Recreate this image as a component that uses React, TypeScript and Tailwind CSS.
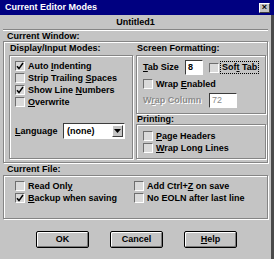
import type { ReactNode } from "react";

function Box({ checked }: { checked?: boolean }) {
  return (
    <span className="flex h-[10px] w-[10px] shrink-0 items-center justify-center border border-t-[#6e6e6e] border-l-[#6e6e6e] border-b-white border-r-white bg-[#dadada]">
      {checked && (
        <svg width="8" height="8" viewBox="0 0 8 8">
          <path d="M1 4.2L3 6.6L7 1" fill="none" stroke="#000" strokeWidth="1.5" />
        </svg>
      )}
    </span>
  );
}

function CheckRow({
  checked,
  children,
}: {
  checked?: boolean;
  children: ReactNode;
}) {
  return (
    <div className="flex h-[12px] items-center gap-[3px]">
      <Box checked={checked} />
      <span className="leading-none whitespace-nowrap">{children}</span>
    </div>
  );
}

const etched =
  "border border-[#858585] shadow-[inset_1px_1px_0_#fff,1px_1px_0_#fff]";

const sunken =
  "border border-t-[#3c3c3c] border-l-[#3c3c3c] border-b-white border-r-white bg-white";

function Button({ children }: { children: ReactNode }) {
  return (
    <div className="flex h-[17px] w-[53px] items-center justify-center rounded-[2px] border border-black shadow-[inset_1px_1px_0_#fff,inset_-1px_-1px_0_#7a7a7a] leading-none">
      {children}
    </div>
  );
}

export default function App() {
  return (
    <div className="h-[259px] w-[274px] overflow-hidden bg-[#c4c4c4] font-['Liberation_Sans',Arial,sans-serif] text-[9px] font-bold text-black">
      {/* Title bar */}
      <div className="flex h-[15px] items-center justify-between bg-[#000080] pl-[5px] pr-[4px] text-white">
        <span className="leading-none">Current Editor Modes</span>
        <span className="flex h-[10px] w-[11px] items-center justify-center border border-t-white border-l-white border-b-[#404040] border-r-[#404040] bg-[#c4c4c4] text-[9px] leading-none text-black">
          ×
        </span>
      </div>

      <div className="h-[244px] border-r-[3px] border-r-[#4a4a4a]">
        <div className="flex h-[14px] items-center justify-center">
          <span className="leading-none">Untitled1</span>
        </div>
        <div className="mx-[3px] h-[2px] border-t border-t-[#858585] border-b border-b-white" />

        <div className="flex h-[10px] items-center pl-[7px] leading-none">
          Current Window:
        </div>

        {/* Current Window panel */}
        <div className={"mx-[3px] flex h-[122px] " + etched}>
          {/* Display / Input */}
          <div className="ml-[5px] flex w-[124px] flex-col">
            <div className="flex h-[13px] items-center pl-[1px] leading-none">
              Display/Input Modes:
            </div>
            <div className={"h-[104px] pl-[5px] pt-[4px] " + etched}>
              <CheckRow checked>
                Auto <u>I</u>ndenting
              </CheckRow>
              <CheckRow>
                Strip Trailing <u>S</u>paces
              </CheckRow>
              <CheckRow checked>
                Show Line <u>N</u>umbers
              </CheckRow>
              <CheckRow>
                <u>O</u>verwrite
              </CheckRow>
              <div className="mt-[15px] flex h-[16px] items-center">
                <span className="w-[48px] leading-none">
                  <u>L</u>anguage
                </span>
                <div className={"flex h-[16px] w-[62px] items-center " + sunken}>
                  <span className="flex-1 pl-[3px] leading-none">(none)</span>
                  <span className="mr-[1px] flex h-[12px] w-[11px] items-center justify-center border border-t-white border-l-white border-b-[#404040] border-r-[#404040] bg-[#c4c4c4]">
                    <svg width="7" height="4" viewBox="0 0 7 4">
                      <path d="M0 0H7L3.5 4Z" fill="#000" />
                    </svg>
                  </span>
                </div>
              </div>
            </div>
          </div>

          {/* Screen formatting + printing */}
          <div className="ml-[3px] flex w-[130px] flex-col">
            <div className="flex h-[13px] items-center pl-[1px] leading-none">
              Screen Formatting:
            </div>
            <div className={"h-[59px] pl-[6px] pt-[4px] " + etched}>
              <div className="flex h-[15px] items-center">
                <span className="w-[42px] leading-none">
                  <u>T</u>ab Size
                </span>
                <div className={"flex h-[15px] w-[18px] items-center pl-[2px] leading-none " + sunken}>
                  8
                </div>
                <span className="ml-[6px]">
                  <Box />
                </span>
                <span className="ml-[1px] border border-dotted border-black px-[1px] py-[1px] leading-none">
                  Sof<u>t</u> Tab
                </span>
              </div>
              <div className="mt-[3px]">
                <CheckRow>
                  Wrap <u>E</u>nabled
                </CheckRow>
              </div>
              <div className="mt-[3px] flex h-[15px] items-center">
                <span className="w-[66px] leading-none text-[#8a8a8a] [text-shadow:1px_1px_0_#fff]">
                  W<u>r</u>ap Column
                </span>
                <div className={"flex h-[15px] w-[28px] items-center pl-[2px] font-normal leading-none text-[#8a8a8a] " + sunken}>
                  72
                </div>
              </div>
            </div>
            <div className="flex h-[10px] items-center pl-[1px] leading-none">
              Printing:
            </div>
            <div className={"h-[35px] pl-[6px] pt-[5px] " + etched}>
              <CheckRow>
                <u>P</u>age Headers
              </CheckRow>
              <CheckRow>
                <u>W</u>rap Long Lines
              </CheckRow>
            </div>
          </div>
        </div>

        <div className="flex h-[12px] items-center pl-[7px] leading-none">
          Current File:
        </div>

        {/* Current File panel */}
        <div className={"mx-[3px] flex h-[44px] pl-[11px] pt-[4px] " + etched}>
          <div className="w-[119px]">
            <CheckRow>
              Read Onl<u>y</u>
            </CheckRow>
            <CheckRow checked>
              <u>B</u>ackup when saving
            </CheckRow>
          </div>
          <div>
            <CheckRow>
              Add Ctrl+<u>Z</u> on save
            </CheckRow>
            <CheckRow>No EOLN after last line</CheckRow>
          </div>
        </div>

        <div className="flex gap-[21px] pl-[36px] pt-[12px]">
          <Button>OK</Button>
          <Button>Cancel</Button>
          <Button>
            <span>
              <u>H</u>elp
            </span>
          </Button>
        </div>
      </div>
    </div>
  );
}
